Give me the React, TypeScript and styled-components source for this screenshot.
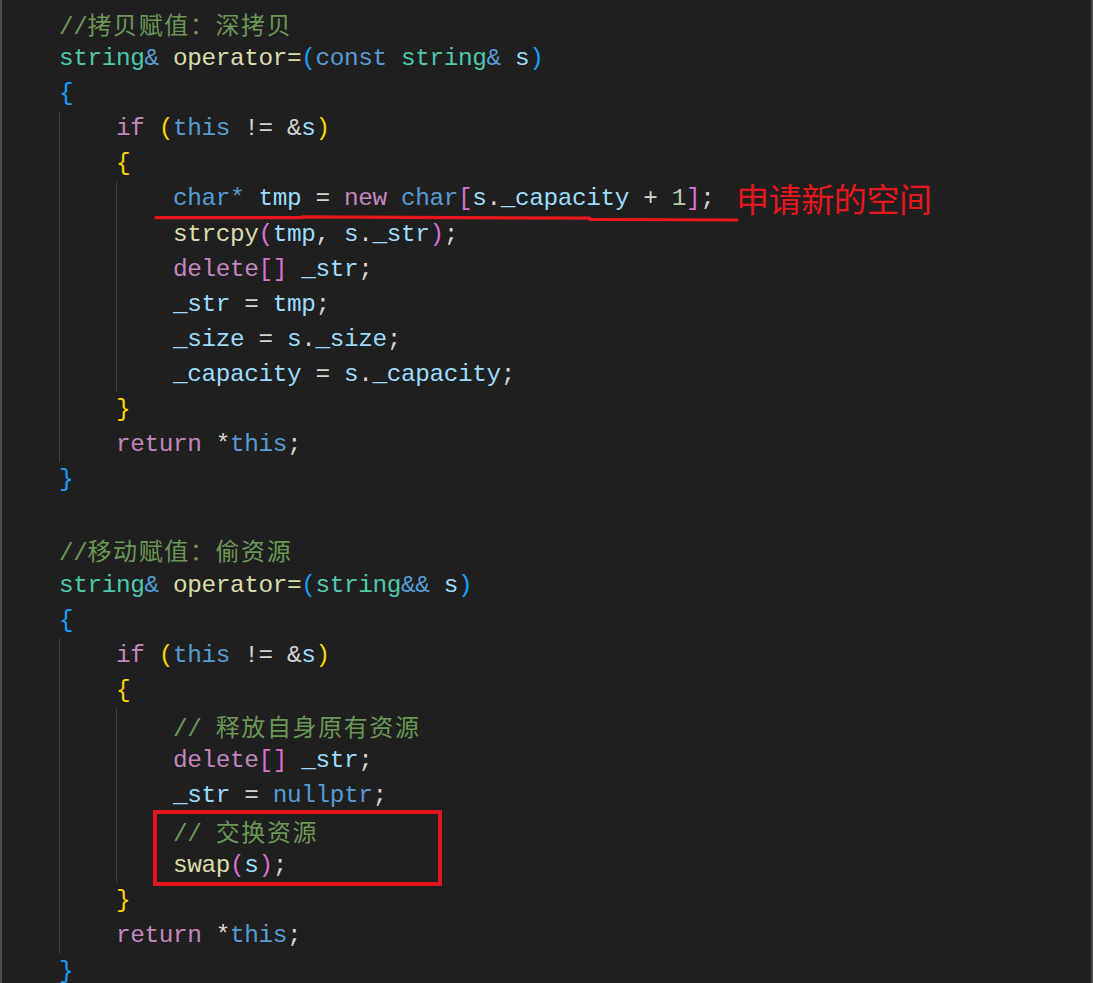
import React from "react";
import styled, { createGlobalStyle } from "styled-components";

const GlobalStyle = createGlobalStyle`
  html, body { margin: 0; padding: 0; background: #1f1f1f; }
  body { overflow: hidden; }
`;

type K =
  | "cm"
  | "ty"
  | "kw"
  | "ct"
  | "fn"
  | "vr"
  | "nm"
  | "tx"
  | "b1"
  | "b2"
  | "b3";

const colors: Record<K, string> = {
  cm: "#6A9955",
  ty: "#4EC9B0",
  kw: "#569CD6",
  ct: "#C586C0",
  fn: "#DCDCAA",
  vr: "#9CDCFE",
  nm: "#B5CEA8",
  tx: "#D4D4D4",
  b1: "#FFD700",
  b2: "#DA70D6",
  b3: "#179FFF",
};

type Tok = [K, string];
type Line = { indent: number; toks: Tok[] };

const L = (indent: number, ...toks: Tok[]): Line => ({ indent, toks });

const lines: Line[] = [
  L(0, ["cm", "//拷贝赋值：深拷贝"]),
  L(0, ["ty", "string"], ["kw", "&"], ["tx", " "], ["fn", "operator="], ["b3", "("], ["kw", "const"], ["tx", " "], ["ty", "string"], ["kw", "&"], ["tx", " "], ["vr", "s"], ["b3", ")"]),
  L(0, ["b3", "{"]),
  L(1, ["ct", "if"], ["tx", " "], ["b1", "("], ["kw", "this"], ["tx", " != &"], ["vr", "s"], ["b1", ")"]),
  L(1, ["b1", "{"]),
  L(2, ["kw", "char*"], ["tx", " "], ["vr", "tmp"], ["tx", " = "], ["ct", "new"], ["tx", " "], ["kw", "char"], ["b2", "["], ["vr", "s"], ["tx", "."], ["vr", "_capacity"], ["tx", " + "], ["nm", "1"], ["b2", "]"], ["tx", ";"]),
  L(2, ["fn", "strcpy"], ["b2", "("], ["vr", "tmp"], ["tx", ", "], ["vr", "s"], ["tx", "."], ["vr", "_str"], ["b2", ")"], ["tx", ";"]),
  L(2, ["ct", "delete"], ["b2", "[]"], ["tx", " "], ["vr", "_str"], ["tx", ";"]),
  L(2, ["vr", "_str"], ["tx", " = "], ["vr", "tmp"], ["tx", ";"]),
  L(2, ["vr", "_size"], ["tx", " = "], ["vr", "s"], ["tx", "."], ["vr", "_size"], ["tx", ";"]),
  L(2, ["vr", "_capacity"], ["tx", " = "], ["vr", "s"], ["tx", "."], ["vr", "_capacity"], ["tx", ";"]),
  L(1, ["b1", "}"]),
  L(1, ["ct", "return"], ["tx", " *"], ["kw", "this"], ["tx", ";"]),
  L(0, ["b3", "}"]),
  L(0),
  L(0, ["cm", "//移动赋值：偷资源"]),
  L(0, ["ty", "string"], ["kw", "&"], ["tx", " "], ["fn", "operator="], ["b3", "("], ["ty", "string"], ["kw", "&&"], ["tx", " "], ["vr", "s"], ["b3", ")"]),
  L(0, ["b3", "{"]),
  L(1, ["ct", "if"], ["tx", " "], ["b1", "("], ["kw", "this"], ["tx", " != &"], ["vr", "s"], ["b1", ")"]),
  L(1, ["b1", "{"]),
  L(2, ["cm", "// 释放自身原有资源"]),
  L(2, ["ct", "delete"], ["b2", "[]"], ["tx", " "], ["vr", "_str"], ["tx", ";"]),
  L(2, ["vr", "_str"], ["tx", " = "], ["kw", "nullptr"], ["tx", ";"]),
  L(2, ["cm", "// 交换资源"]),
  L(2, ["fn", "swap"], ["b2", "("], ["vr", "s"], ["b2", ")"], ["tx", ";"]),
  L(1, ["b1", "}"]),
  L(1, ["ct", "return"], ["tx", " *"], ["kw", "this"], ["tx", ";"]),
  L(0, ["b3", "}"]),
];

const Editor = styled.div`
  position: relative;
  width: 1093px;
  height: 983px;
  overflow: hidden;
  box-sizing: border-box;
  background: #1f1f1f;
  box-shadow: inset 2px 0 0 #4d4d4d, inset -2px 0 0 #4d4d4d;
  padding: 6px 0 0 59px;
  font-family: "Liberation Mono", "Noto Sans CJK SC", monospace;
  font-size: 24.4px;
  letter-spacing: -0.39px;
  color: #d4d4d4;
`;

const Row = styled.div`
  display: flex;
  height: 35.1px;
  line-height: 35.1px;
  white-space: pre;
`;

const Guide = styled.span`
  display: inline-block;
  flex: none;
  width: 57px;
  height: 100%;
  box-shadow: inset 1px 0 0 #404040;
`;

const Tk = styled.span<{ $k: K }>`
  color: ${(p) => colors[p.$k]};
`;

const Cjk = styled.span`
  font-family: "Noto Sans CJK SC", sans-serif;
  font-size: 24px;
  letter-spacing: 1.6px;
`;

const Underline = styled.svg`
  position: absolute;
  left: 0;
  top: 0;
  pointer-events: none;
`;

const Note = styled.div`
  position: absolute;
  left: 736px;
  top: 180px;
  font-family: "Noto Sans CJK SC", sans-serif;
  font-size: 33px;
  line-height: 36px;
  color: #e8161d;
  white-space: nowrap;
`;

const HighlightBox = styled.div`
  position: absolute;
  left: 153px;
  top: 810px;
  width: 289px;
  height: 76px;
  box-sizing: border-box;
  border: 4px solid #e3141c;
`;

const cjkRe = /([\u3000-\u303f\u4e00-\u9fff\uff00-\uffef]+)/;

function renderText(text: string) {
  const parts = text.split(cjkRe);
  return parts.map((p, i) =>
    i % 2 === 1 ? <Cjk key={i}>{p}</Cjk> : <React.Fragment key={i}>{p}</React.Fragment>
  );
}

export default function App() {
  return (
    <>
      <GlobalStyle />
      <Editor>
        {lines.map((ln, i) => (
          <Row key={i}>
            {Array.from({ length: ln.indent }).map((_, g) => (
              <Guide key={g} />
            ))}
            {ln.toks.map(([k, t], j) => (
              <Tk key={j} $k={k}>
                {renderText(t)}
              </Tk>
            ))}
          </Row>
        ))}
        <Underline width="1093" height="983" viewBox="0 0 1093 983">
          <path
            d="M156 217.6 L302 217.6 M302 216.8 L590 218.2 M590 219.3 L737 220"
            stroke="#e8161d"
            strokeWidth="3.2"
            strokeLinecap="round"
            fill="none"
          />
        </Underline>
        <Note>申请新的空间</Note>
        <HighlightBox />
      </Editor>
    </>
  );
}
